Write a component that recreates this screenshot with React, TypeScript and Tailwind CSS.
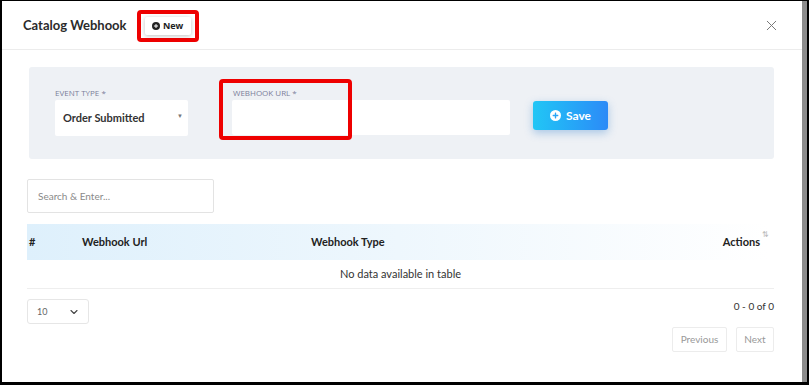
import React from 'react';
import { X, ChevronDown } from 'lucide-react';

const PlusDot: React.FC<{ size: number; color: string; fg: string }> = ({ size, color, fg }) => (
  <svg width={size} height={size} viewBox="0 0 16 16">
    <circle cx="8" cy="8" r="8" fill={color} />
    <rect x="7" y="3.8" width="2" height="8.4" rx="0.6" fill={fg} />
    <rect x="3.8" y="7" width="8.4" height="2" rx="0.6" fill={fg} />
  </svg>
);

const App: React.FC = () => {
  return (
    <div className="flex h-[385px] w-[809px] bg-black pt-px pl-[2px] pr-[2px] pb-[3px] font-['Lato',sans-serif]">
      <div className="flex flex-1 flex-col bg-white border-r-[5px] border-[#8c8c8c]">
        {/* header */}
        <div className="flex h-[49px] items-center border-b border-[#ececec] pl-[21px] pr-[22px]">
          <h1 className="mt-[2px] text-[13px] font-bold text-[#2b2b2b]">Catalog Webhook</h1>
          <div className="ml-[10px] mt-[2px] rounded-[4px] border-[4px] border-[#ee0000] px-[4px] py-[3px]">
            <button className="flex h-[18px] w-[46px] items-center justify-center gap-[3px] rounded-[2px] bg-white shadow-[0_1px_4px_rgba(0,0,0,0.25)] text-[9px] font-bold text-[#222] font-['Open_Sans',sans-serif]">
              <PlusDot size={8} color="#222" fg="#fff" />
              New
            </button>
          </div>
          <X className="ml-auto h-[17px] w-[17px] text-[#777]" strokeWidth={1.4} />
        </div>

        <div className="flex flex-1 flex-col px-[25px]">
          {/* form panel */}
          <div className="ml-[2px] mr-[3px] mt-[17px] flex h-[92px] items-start rounded-[3px] bg-[#eef1f5] pl-[26px] pt-[21px]">
            <div className="flex w-[133px] flex-col">
              <label className="mb-[2px] text-[8px] leading-[10px] text-[#7b7e9a] font-['Open_Sans',sans-serif]">EVENT TYPE *</label>
              <div className="flex h-[36px] items-center justify-between rounded-[2px] bg-white pl-[8px] pr-[5px]">
                <span className="text-[11px] font-bold text-[#333]">Order Submitted</span>
                <span className="mb-[6px] text-[6px] text-[#777]">▼</span>
              </div>
            </div>
            <div className="relative ml-[44px] flex w-[278px] flex-col">
              <label className="mb-[2px] pl-[1px] text-[8px] leading-[10px] text-[#7b7e9a] font-['Open_Sans',sans-serif]">WEBHOOK URL *</label>
              <div className="h-[35px] rounded-[2px] bg-white" />
              <div className="absolute left-[-13px] top-[-9px] h-[61px] w-[133px] rounded-[4px] border-[4px] border-[#ee0000]" />
            </div>
            <button className="ml-[23px] mt-[13px] flex h-[29px] w-[75px] items-center justify-center gap-[5px] rounded-[3px] bg-gradient-to-r from-[#22c6f5] to-[#2c8af7] text-[12px] font-bold text-white shadow-[0_3px_8px_rgba(40,120,200,0.35)]">
              <PlusDot size={11} color="#fff" fg="#2aa6f6" />
              Save
            </button>
          </div>

          {/* search */}
          <input
            className="mt-[20px] h-[34px] w-[187px] rounded-[2px] border border-[#e3e3e3] px-[10px] text-[10px] text-[#555] placeholder:text-[#8a8a8a] outline-none"
            placeholder="Search & Enter..."
          />

          {/* table */}
          <div className="mt-[11px] w-[747px]">
            <div className="flex h-[36px] w-[741px] items-center bg-gradient-to-r from-[#def0fc] via-[#eef7fd] to-white text-[11px] font-bold text-[#222]">
              <span className="w-[55px] pl-[2px]">#</span>
              <span className="w-[229px]">Webhook Url</span>
              <span>Webhook Type</span>
              <span className="relative ml-auto mr-[8px]">
                Actions
                <span className="absolute -right-[9px] -top-[6px] text-[8px] font-normal text-[#bbb]">⇅</span>
              </span>
            </div>
            <div className="flex h-[29px] items-center justify-center border-b border-[#eeeeee] text-[11px] text-[#333]">
              No data available in table
            </div>
          </div>

          {/* footer */}
          <div className="flex w-[747px] justify-between">
            <div className="mt-[10px] flex h-[25px] w-[62px] items-center justify-between rounded-[3px] border border-[#e6e6e6] pl-[9px] pr-[8px] text-[9px] text-[#666]">
              10
              <ChevronDown className="h-[12px] w-[12px] text-[#444]" strokeWidth={2.2} />
            </div>
            <div className="flex flex-col items-end">
              <span className="mt-[10px] text-[10px] text-[#333]">0 - 0 of 0</span>
              <div className="mt-[13px] flex gap-[9px]">
                <button className="h-[25px] w-[55px] rounded-[2px] border border-[#ececec] text-[10px] text-[#999]">Previous</button>
                <button className="h-[25px] w-[38px] rounded-[2px] border border-[#ececec] text-[10px] text-[#999]">Next</button>
              </div>
            </div>
          </div>
        </div>
      </div>
    </div>
  );
};

export default App;
